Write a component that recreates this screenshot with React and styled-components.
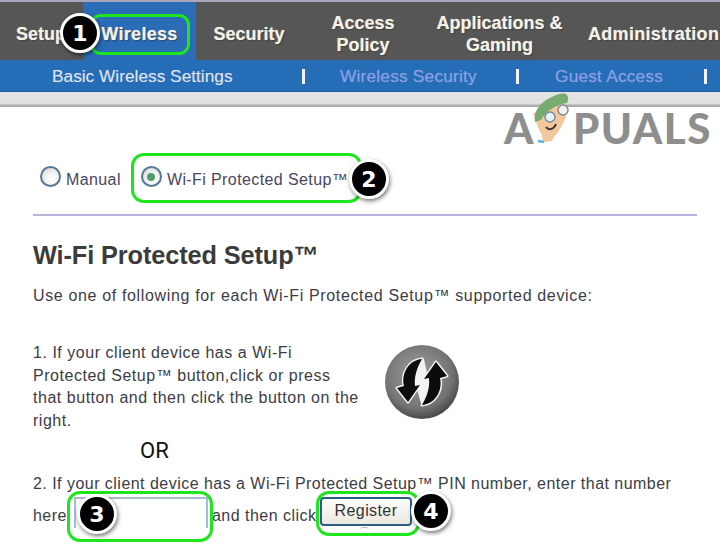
import React from "react";
import styled, { createGlobalStyle } from "styled-components";

const Global = createGlobalStyle`
  html, body { margin: 0; padding: 0; background: #fff; }
  body { width: 720px; height: 550px; overflow: hidden; font-family: "Liberation Sans", Arial, sans-serif; }
  * { box-sizing: border-box; }
`;

const Page = styled.div`
  position: relative;
  width: 720px;
  height: 550px;
  overflow: hidden;
  background: #fff;
`;

const TopNav = styled.nav`
  display: flex;
  height: 60px;
  padding-top: 6px;
  background: #565656;
  border-top: 2px solid #a9a5bb;
`;

const Tab = styled.div`
  width: ${p => p.$w}px;
  flex: none;
  margin-top: ${p => (p.$active ? -6 : 0)}px;
  padding-top: ${p => (p.$active ? 6 : 0)}px;
  padding-left: ${p => p.$pl || 0}px;
  display: flex;
  align-items: center;
  justify-content: ${p => (p.$pl ? "flex-start" : "center")};
  text-align: center;
  white-space: pre-line;
  background: ${p => (p.$active ? "#2a6cb6" : "transparent")};
  color: #f4f1e6;
  font-size: 18px;
  font-weight: 700;
  line-height: 22px;
  letter-spacing: ${p => p.$ls || 0}px;
  text-shadow: 0 0 1px rgba(255, 255, 255, 0.5), 1px 1px 1px rgba(40, 40, 40, 0.6);
`;

const SubNav = styled.div`
  display: flex;
  align-items: center;
  height: 32px;
  padding-top: 1px;
  background: #266db8;
  border-bottom: 1px solid #1f5fa5;
  font-size: 17.3px;
  text-shadow: 0 0 1px rgba(255, 255, 255, 0.2);
`;

const SubLink = styled.span`
  flex: none;
  width: ${p => p.$w}px;
  padding-left: ${p => p.$pl}px;
  white-space: nowrap;
  letter-spacing: ${p => (p.$active ? 0 : 0.2)}px;
  color: ${p => (p.$active ? "#e3e6f4" : "#8f9fe4")};
`;

const Sep = styled.span`
  flex: none;
  width: 3px;
  height: 15px;
  background: #f2f4f8;
`;

const Strip = styled.div`
  height: 15px;
  background: linear-gradient(#e2e2e2 0, #e2e2e2 75%, #b1b1b1 90%, #a8a8a8 100%);
`;

const Content = styled.main`
  padding: 0 23px 0 33px;
`;

const ModeRow = styled.div`
  display: flex;
  align-items: center;
  height: 48px;
  margin-top: 47px;
  padding: 4px 0 0 7px;
  color: #4a4560;
  font-size: 16px;
`;

const RadioLabel = styled.label`
  display: flex;
  align-items: center;
  gap: 5px;
  margin-right: ${p => p.$mr || 0}px;
  letter-spacing: 0.4px;
  white-space: nowrap;
`;

const Radio = styled.span`
  position: relative;
  display: block;
  width: 21px;
  height: 21px;
  margin-top: -7px;
  border-radius: 50%;
  border: 2px solid #557798;
  background: radial-gradient(circle at 60% 65%, #fff 0, #f1f1f1 45%, #cfcfcf 100%);

  &::after {
    content: "";
    display: ${p => (p.$on ? "block" : "none")};
    position: absolute;
    left: 4.5px;
    top: 4.5px;
    width: 8px;
    height: 8px;
    border-radius: 50%;
    background: #4f9e68;
  }
`;

const Rule = styled.hr`
  margin: 12px 0 0;
  height: 2px;
  border: 0;
  background: #b7b3da;
`;

const Heading = styled.h1`
  margin: 24px 0 0;
  font-size: 25.3px;
  line-height: 30px;
  font-weight: 700;
  color: #3b3b3b;
  letter-spacing: -0.1px;
  white-space: nowrap;
`;

const Intro = styled.p`
  margin: 16px 0 0;
  font-size: 16px;
  line-height: 20px;
  letter-spacing: 0.65px;
  color: #3c3c46;
  white-space: nowrap;
`;

const StepOne = styled.section`
  display: flex;
  margin-top: 36px;
`;

const StepText = styled.p`
  margin: 0;
  width: 349px;
  flex: none;
  font-size: 16px;
  line-height: 22.7px;
  letter-spacing: 0.53px;
  color: #3c3c46;
  white-space: pre-line;
`;

const WpsIcon = styled.svg`
  flex: none;
  width: 80px;
  height: 80px;
`;

const Or = styled.div`
  margin: 6px 0 0 107px;
  font-family: Roboto, "Liberation Sans", sans-serif;
  font-size: 22px;
  line-height: 24px;
  color: #111;
`;

const StepTwo = styled.p`
  margin: 11px 0 0;
  font-size: 16px;
  line-height: 20px;
  letter-spacing: 0.47px;
  color: #3c3c46;
  white-space: nowrap;
`;

const PinRow = styled.div`
  display: flex;
  align-items: flex-start;
  font-size: 16px;
  line-height: 20px;
  letter-spacing: 0.47px;
  color: #3c3c46;
  white-space: nowrap;
`;

const RowText = styled.span`
  flex: none;
  width: ${p => p.$w}px;
  margin-top: 12px;
`;

const PinInput = styled.div`
  flex: none;
  width: 134px;
  height: 31px;
  margin: 3px 4px 0 7px;
  border: 2px solid #a9bbd4;
  border-bottom: 0;
`;

const RegisterButton = styled.button`
  position: relative;
  flex: none;
  width: 92px;
  height: 29px;
  margin-top: 3px;
  padding: 0;
  border: 2px solid #2c5c88;
  border-radius: 4px;
  background: linear-gradient(#fdfdfb, #ece9df);
  color: #33333c;
  font-family: "Liberation Sans", Arial, sans-serif;
  font-size: 16px;
  letter-spacing: 0.4px;

  &::after {
    content: "";
    position: absolute;
    left: 38px;
    bottom: -7px;
    width: 9px;
    height: 3px;
    border-top: 1px solid #b5b5b5;
    border-radius: 50%;
  }
`;

const Highlight = styled.div`
  position: absolute;
  left: ${p => p.$x}px;
  top: ${p => p.$y}px;
  width: ${p => p.$w}px;
  height: ${p => p.$h}px;
  border: 3px solid #1ee61e;
  border-radius: ${p => p.$r || 12}px;
`;

const Badge = styled.div`
  position: absolute;
  left: ${p => p.$x - 20}px;
  top: ${p => p.$y - 20}px;
  width: 40px;
  height: 40px;
  display: flex;
  align-items: center;
  justify-content: center;
  border-radius: 50%;
  background: #000;
  border: 3.5px solid #fff;
  box-shadow: 1px 2px 4px rgba(0, 0, 0, 0.55);
  color: #fff;
  font-family: "DejaVu Sans", sans-serif;
  font-size: 22px;
  font-weight: 700;
`;

const Logo = styled.div`
  position: absolute;
  left: 504px;
  top: 92px;
  width: 216px;
  height: 56px;
`;

const LogoLetters = styled.span`
  position: absolute;
  left: ${p => p.$x}px;
  top: 10px;
  font-family: Lato, "Liberation Sans", sans-serif;
  font-weight: 900;
  font-size: 42px;
  line-height: 52px;
  letter-spacing: ${p => p.$ls || 0}px;
  color: #8e8e8e;
`;

const Mascot = styled.svg`
  position: absolute;
  left: 28px;
  top: 0;
  width: 52px;
  height: 52px;
`;

const tabs = [
  { label: "Setup", w: 83, pl: 16 },
  { label: "Wireless", w: 113, active: true, ls: 0.3 },
  { label: "Security", w: 106 },
  { label: "Access\nPolicy", w: 122 },
  { label: "Applications &\nGaming", w: 151 },
  { label: "Administration", w: 145, pl: 13, ls: 0.3 },
];

const marks = [
  { x: 90, y: 14, w: 100, h: 41, r: 11 },
  { x: 131, y: 153, w: 231, h: 50, r: 13 },
  { x: 67, y: 491, w: 146, h: 51, r: 13 },
  { x: 316, y: 491, w: 104, h: 45, r: 13 },
];

const badges = [
  { n: 1, x: 80, y: 33 },
  { n: 2, x: 369, y: 179 },
  { n: 3, x: 97, y: 514 },
  { n: 4, x: 431, y: 511 },
];

export default function App() {
  return (
    <Page>
      <Global />
      <TopNav>
        {tabs.map(t => (
          <Tab key={t.label} $w={t.w} $pl={t.pl} $ls={t.ls} $active={t.active}>{t.label}</Tab>
        ))}
      </TopNav>
      <SubNav>
        <SubLink $w={302} $pl={52} $active>Basic Wireless Settings</SubLink>
        <Sep />
        <SubLink $w={211} $pl={35}>Wireless Security</SubLink>
        <Sep />
        <SubLink $w={185} $pl={36}>Guest Access</SubLink>
        <Sep />
      </SubNav>
      <Strip />
      <Content>
        <ModeRow>
          <RadioLabel $mr={20}><Radio />Manual</RadioLabel>
          <RadioLabel><Radio $on />Wi-Fi Protected Setup™</RadioLabel>
        </ModeRow>
        <Rule />
        <Heading>Wi-Fi Protected Setup™</Heading>
        <Intro>Use one of following for each Wi-Fi Protected Setup™ supported device:</Intro>
        <StepOne>
          <StepText>{"1. If your client device has a Wi-Fi\nProtected Setup™ button,click or press\nthat button and then click the button on the\nright."}</StepText>
          <WpsIcon viewBox="0 0 80 80" aria-hidden="true">
            <defs>
              <radialGradient id="wps" cx="0.45" cy="0.4" r="0.65">
                <stop offset="0" stopColor="#a2a2a2" />
                <stop offset="0.7" stopColor="#737373" />
                <stop offset="1" stopColor="#3c3c3c" />
              </radialGradient>
            </defs>
            <circle cx="40" cy="40" r="37" fill="url(#wps)" />
            <path d="M40 15 C35 28 33 36 34 44 L40 65 C46 54 48 44 46 36 L42 17Z" fill="#f2f2f2" />
            <path d="M40 17 C27 18 19 31 22 44 L15 46 L26 60 L38 43 L33 44 C32 34 35 26 40 17Z" fill="#0c0c0c" stroke="#f2f2f2" strokeWidth="3" paintOrder="stroke" strokeLinejoin="round" />
            <path d="M40 63 C53 62 61 49 58 36 L65 34 L54 20 L42 37 L47 36 C48 46 45 54 40 63Z" fill="#0c0c0c" stroke="#f2f2f2" strokeWidth="3" paintOrder="stroke" strokeLinejoin="round" />
          </WpsIcon>
        </StepOne>
        <Or>OR</Or>
        <StepTwo>2. If your client device has a Wi-Fi Protected Setup™ PIN number, enter that number</StepTwo>
        <PinRow>
          <RowText $w={34}>here</RowText>
          <PinInput />
          <RowText $w={108}>and then click</RowText>
          <RegisterButton type="button">Register</RegisterButton>
        </PinRow>
      </Content>
      <Logo>
        <LogoLetters $x={0}>A</LogoLetters>
        <LogoLetters $x={69} $ls={1.5}>PUALS</LogoLetters>
        <Mascot viewBox="0 0 52 52" aria-hidden="true">
          <path d="M1 21 C4 30 7 38 10 43 L11 50 L20 49 C22 44 24 43 26 40 C30 34 32 30 34 24 L30 12 Z" fill="#f4c79d" />
          <path d="M3 30 C1 20 8 10 20 5 C26 2 32 0 35 3 C37 6 36 9 35 11 C26 12 14 18 9 28 Z" fill="#78ab70" />
          <circle cx="18" cy="25" r="5" fill="#e8f2fa" stroke="#6d91a8" strokeWidth="1.5" />
          <circle cx="31" cy="18" r="5" fill="#eef2f4" stroke="#8a8a8a" strokeWidth="1.5" />
          <path d="M14 35 C17 39 22 37 24 32" fill="none" stroke="#333" strokeWidth="2" />
          <path d="M6 49 L12 50" stroke="#5fb0dc" strokeWidth="2.5" />
        </Mascot>
      </Logo>
      {marks.map(m => (
        <Highlight key={m.x} $x={m.x} $y={m.y} $w={m.w} $h={m.h} $r={m.r} />
      ))}
      {badges.map(b => (
        <Badge key={b.n} $x={b.x} $y={b.y}>{b.n}</Badge>
      ))}
    </Page>
  );
}
